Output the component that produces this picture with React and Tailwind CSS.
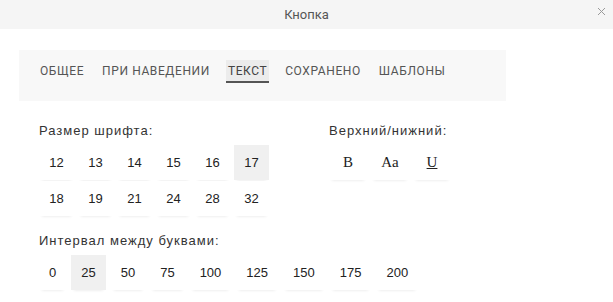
import { useState } from 'react';

const TABS = ['Общее', 'При наведении', 'Текст', 'Сохранено', 'Шаблоны'];
const SIZES = [12, 13, 14, 15, 16, 17, 18, 19, 21, 24, 28, 32];
const SPACING = [0, 25, 50, 75, 100, 125, 150, 175, 200];

const sans = { fontFamily: '"Liberation Sans", Arial, sans-serif' };
const roboto = { fontFamily: 'Roboto, "Liberation Sans", sans-serif' };
const serif = { fontFamily: '"Liberation Serif", "Times New Roman", serif' };

// small square-ish option button, grey when picked
const Option = ({ active, className = '', style, children, onClick }) => (
    <button
        onClick={onClick}
        style={style}
        className={`h-[35px] flex items-center justify-center text-[#222] shadow-[0_3px_3px_-3px_rgba(0,0,0,0.12)] ${active ? 'bg-[#f0f0f0]' : 'bg-white'} ${className}`}
    >
        {children}
    </button>
);

const App = () => {
    const [tab, setTab] = useState('Текст');
    const [size, setSize] = useState(17);
    const [spacing, setSpacing] = useState(25);

    return (
        <div className="w-[613px] h-[302px] bg-white overflow-hidden">
            <div className="relative h-[29px] bg-[#f5f5f5] flex items-center justify-center">
                <span className="text-[13px] text-[#555]" style={roboto}>Кнопка</span>
                <button className="absolute right-[7px] top-[7px] w-[9px] h-[9px] text-[#9a9a9a]">
                    <svg viewBox="0 0 9 9" width="9" height="9" stroke="currentColor" strokeWidth="1">
                        <path d="M1 1 L8 8 M8 1 L1 8" />
                    </svg>
                </button>
            </div>

            <div className="pt-[21px] pl-[19px]">
                <div className="w-[487px] h-[51px] bg-[#f8f8f8] flex items-start pt-[10px] pl-[19px] gap-[14px]">
                    {TABS.map((t) => (
                        <button
                            key={t}
                            onClick={() => setTab(t)}
                            style={roboto}
                            className={`h-[23px] px-[2px] pt-[1px] uppercase text-[12px] tracking-[0.6px] border-b-2 ${tab === t ? 'bg-[#ececec] border-[#555] text-[#444]' : 'border-transparent text-[#555]'}`}
                        >
                            {t}
                        </button>
                    ))}
                </div>
            </div>

            <div className="px-[39px] pt-[22px]" style={sans}>
                <div className="flex">
                    <div className="w-[290px]">
                        <div className="text-[13px] leading-[16px] tracking-[1px] text-[#333]">Размер шрифта:</div>
                        <div className="mt-[6px] grid grid-cols-[repeat(6,35px)] gap-x-[4px] gap-y-[1px]">
                            {SIZES.map((s) => (
                                <Option key={s} active={size === s} onClick={() => setSize(s)} className="text-[13px]">
                                    {s}
                                </Option>
                            ))}
                        </div>
                    </div>
                    <div>
                        <div className="text-[13px] leading-[16px] tracking-[1px] text-[#333]">Верхний/нижний:</div>
                        <div className="mt-[6px] flex gap-[4px]">
                            <Option className="w-[38px] text-[15px]" style={serif}>B</Option>
                            <Option className="w-[38px] text-[15px]" style={serif}>Aa</Option>
                            <Option className="w-[38px] text-[15px] underline" style={serif}>U</Option>
                        </div>
                    </div>
                </div>

                <div className="mt-[17px] text-[13px] leading-[16px] tracking-[1px] text-[#333]">Интервал между буквами:</div>
                <div className="mt-[6px] flex gap-[5px]">
                    {SPACING.map((s) => (
                        <Option key={s} active={spacing === s} onClick={() => setSpacing(s)} className="px-[10px] text-[13px]">
                            {s}
                        </Option>
                    ))}
                </div>
            </div>
        </div>
    );
};

export default App;
